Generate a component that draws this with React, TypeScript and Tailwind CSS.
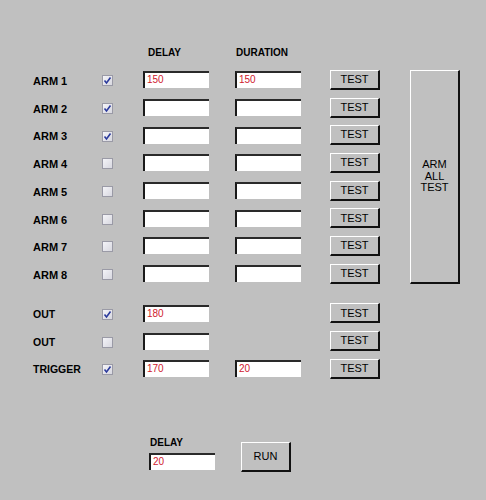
import React from "react";

const font = { fontFamily: '"Liberation Sans", Arial, sans-serif' };

function Check({ checked }: { checked: boolean }) {
  return (
    <div className="w-[11px] h-[11px] border border-[#9a9aa6] bg-gradient-to-br from-[#f4f4f8] to-[#d8d8e0] flex items-center justify-center">
      {checked && (
        <svg width="9" height="9" viewBox="0 0 9 9">
          <path d="M1.5 4.5 L3.5 7 L7.5 1.5" fill="none" stroke="#2b3a9c" strokeWidth="1.6" />
        </svg>
      )}
    </div>
  );
}

function Field({ value, w = "w-[66px]" }: { value?: string; w?: string }) {
  return (
    <div
      className={`${w} h-[17px] bg-white border-t-2 border-l-2 border-t-[#2a2a2a] border-l-[#1a1a1a] text-[10px] leading-[14px] pl-[2px] text-[#d0202e]`}
    >
      {value}
    </div>
  );
}

function Btn({ label }: { label: string }) {
  return (
    <div className="w-[50px] h-[20px] bg-[#c0c0c0] border-t border-l border-white border-b-2 border-r-2 border-b-[#111] border-r-[#111] flex items-center justify-center text-[11px] text-black">
      {label}
    </div>
  );
}

function Row({
  label,
  checked,
  delay,
  duration,
  showDuration = true,
  small = false,
}: {
  label: string;
  checked: boolean;
  delay?: string;
  duration?: string;
  showDuration?: boolean;
  small?: boolean;
}) {
  return (
    <div className="h-[27.7px] flex items-center">
      <div className={`w-[70px] pl-[1px] font-bold ${small ? "text-[10.5px]" : "text-[11px]"} text-black pt-[3px]`}>{label}</div>
      <div className="w-[41px] pt-[2px]">
        <Check checked={checked} />
      </div>
      <Field value={delay} />
      <div className="w-[26px]" />
      {showDuration ? <Field value={duration} /> : <div className="w-[66px]" />}
      <div className="w-[29px]" />
      <Btn label="TEST" />
    </div>
  );
}

export default function App() {
  const arms = [
    { c: true, d: "150", u: "150" },
    { c: true },
    { c: true },
    { c: false },
    { c: false },
    { c: false },
    { c: false },
    { c: false },
  ];
  return (
    <div className="w-[486px] h-[500px] bg-[#c0c0c0] overflow-hidden" style={font}>
      <div className="pt-[44px] pl-[32px]">
        <div className="h-[16px] flex items-center text-[10px] font-bold text-black">
          <div className="w-[116px]" />
          <div className="w-[88px]">DELAY</div>
          <div>DURATION</div>
        </div>
        <div className="flex mt-[6px]">
          <div className="flex flex-col">
            {arms.map((a, i) => (
              <Row key={i} label={`ARM ${i + 1}`} checked={a.c} delay={a.d} duration={a.u} />
            ))}
          </div>
          <div className="ml-[30px] mt-[4px] w-[50px] h-[214px] bg-[#c0c0c0] border-t border-l border-white border-b-2 border-r-2 border-b-[#111] border-r-[#111] flex items-center justify-center text-center text-[11px] leading-[11.5px] text-black">
            ARM
            <br />
            ALL
            <br />
            TEST
          </div>
        </div>
        <div className="flex flex-col mt-[12px]">
          <Row label="OUT" checked={true} delay="180" showDuration={false} small />
          <Row label="OUT" checked={false} showDuration={false} small />
          <Row label="TRIGGER" checked={true} delay="170" duration="20" small />
        </div>
        <div className="flex items-start mt-[53px] pl-[117px]">
          <div className="flex flex-col">
            <div className="h-[14px] leading-[14px] text-[10px] font-bold text-black pl-[1px]">DELAY</div>
            <div className="mt-[3px]">
              <Field value="20" />
            </div>
          </div>
          <div className="ml-[26px] mt-[6px] w-[50px] h-[30px] bg-[#c0c0c0] border-t border-l border-white border-b-2 border-r-2 border-b-[#111] border-r-[#111] flex items-center justify-center text-[11px] text-black">
            RUN
          </div>
        </div>
      </div>
    </div>
  );
}
